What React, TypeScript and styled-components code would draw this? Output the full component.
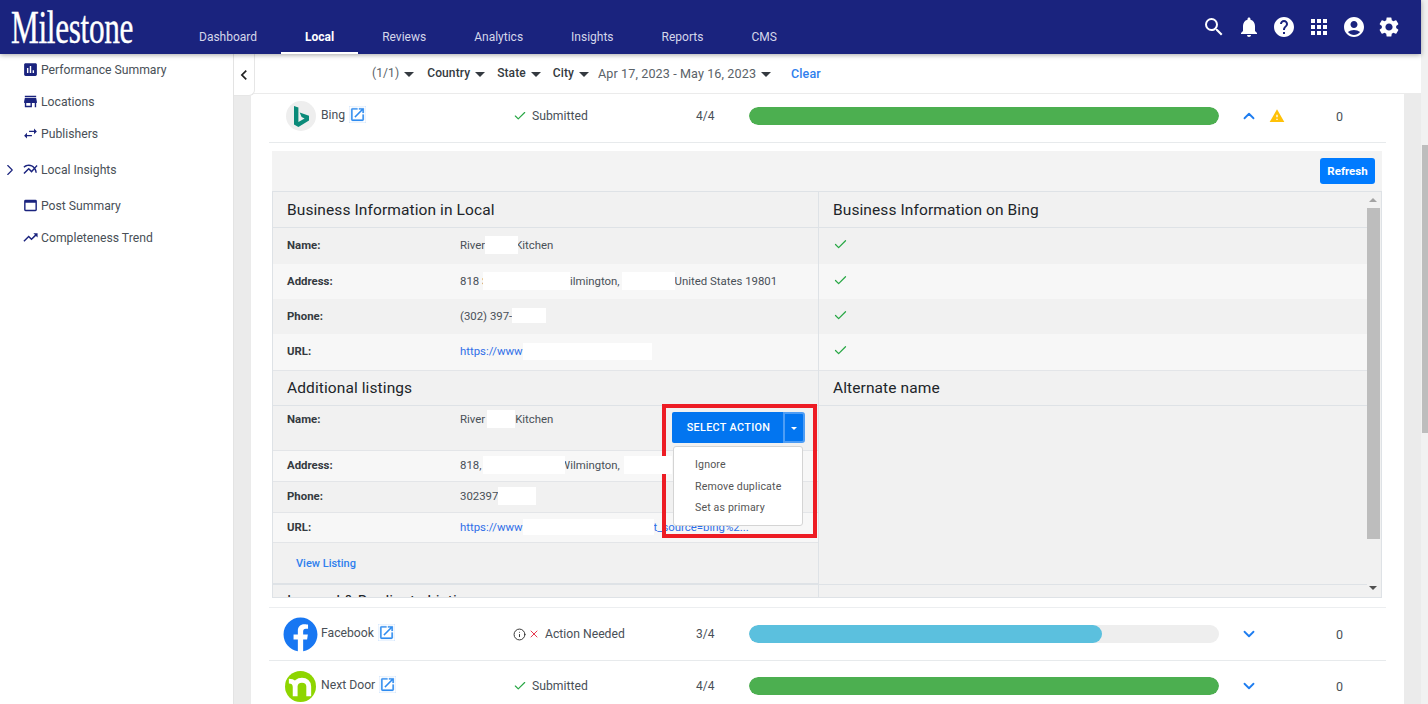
import styled, { createGlobalStyle } from "styled-components";
import {
  MdSearch,
  MdNotifications,
  MdHelp,
  MdApps,
  MdAccountCircle,
  MdSettings,
  MdAssessment,
  MdStore,
  MdSwapHoriz,
  MdMultilineChart,
  MdWebAsset,
  MdTrendingUp,
  MdChevronLeft,
  MdOpenInNew,
  MdWarning,
} from "react-icons/md";
import { FaFacebook } from "react-icons/fa";
import { Check, ChevronDown, ChevronRight, ChevronUp, Info, X } from "lucide-react";

const GlobalStyle = createGlobalStyle`
  html, body {
    margin: 0;
    padding: 0;
    height: 100%;
    overflow: hidden;
    background: #fff;
  }
  body {
    font-family: Roboto, "Liberation Sans", sans-serif;
    color: #495057;
  }
  * {
    box-sizing: border-box;
  }
`;

const Page = styled.div`
  display: flex;
  width: 1428px;
  height: 704px;
  overflow: hidden;
`;

const PageBody = styled.div`
  display: flex;
  flex-direction: column;
  width: 1421px;
  height: 704px;
`;

const PageScrollbar = styled.div`
  width: 7px;
  height: 704px;
  padding-top: 145px;
  padding-left: 1px;
  background: #f1f1f1;
`;

const PageThumb = styled.div`
  height: 288px;
  background: #bdbdbd;
`;

/* header */
const Header = styled.header`
  position: relative;
  z-index: 3;
  display: flex;
  align-items: stretch;
  flex: 0 0 54px;
  background: #1a237e;
  box-shadow: 0 1px 5px rgba(0, 0, 0, 0.35);
`;

const LogoSlot = styled.div`
  width: 175px;
  padding-left: 11px;
  overflow: hidden;
`;

const Logo = styled.div`
  font-family: "Liberation Serif", serif;
  font-size: 47px;
  line-height: 54px;
  color: #fff;
  letter-spacing: -0.5px;
  -webkit-text-stroke: 0.4px #fff;
  transform: scaleX(0.665);
  transform-origin: left center;
  white-space: nowrap;
`;

const Nav = styled.nav`
  display: flex;
  flex: 1;
`;

const NavTab = styled.a<{ $active?: boolean }>`
  display: flex;
  align-items: center;
  padding: 21px 24px 0;
  font-size: 12px;
  font-weight: ${({ $active }) => ($active ? 700 : 400)};
  color: ${({ $active }) => ($active ? "#fff" : "#d5d7ea")};
  border-bottom: 2px solid ${({ $active }) => ($active ? "#fff" : "transparent")};
`;

const HeaderIcons = styled.div`
  display: flex;
  align-items: center;
  gap: 11px;
  padding: 0 20px 0 0;
  color: #fff;
  font-size: 24px;

  svg {
    display: block;
  }
`;

/* layout under the header */
const Body = styled.div`
  display: flex;
  flex: 1;
  min-height: 0;
`;

const Sidebar = styled.aside`
  flex: 0 0 234px;
  background: #fff;
  border-right: 1px solid #e3e3e3;
`;

const SideItem = styled.div<{ $height?: number }>`
  position: relative;
  display: flex;
  align-items: center;
  gap: 2px;
  height: ${({ $height }) => $height || 32}px;
  padding-left: 22px;
  padding-bottom: 1px;
  font-size: 12.2px;
  color: #495057;

  > svg {
    flex: none;
    color: #1a237e;
    font-size: 17px;
  }
`;

const SideArrow = styled.span`
  position: absolute;
  left: 1px;
  top: 50%;
  margin-top: -9px;
  line-height: 0;
  color: #1a237e;
`;

const Main = styled.main`
  position: relative;
  display: flex;
  flex-direction: column;
  flex: 1;
  min-width: 0;
  background: #ebebeb;
`;

const CollapseTab = styled.button`
  position: absolute;
  z-index: 2;
  left: 0;
  top: 0;
  display: flex;
  align-items: center;
  justify-content: center;
  width: 21px;
  height: 42px;
  padding: 0;
  background: #fff;
  border: 0;
  border-right: 1px solid #e6e6e6;
  border-bottom: 1px solid #e6e6e6;
  border-radius: 0 0 6px 0;
  color: #222;
  font-size: 28px;
`;

const FilterBar = styled.div`
  display: flex;
  align-items: center;
  flex: 0 0 39px;
  padding: 0 0 1px 138px;
  background: #fff;
  font-size: 12px;
  letter-spacing: 0.1px;
`;

const FilterItem = styled.span<{ $bold?: boolean; $gap?: number; $size?: number }>`
  display: flex;
  align-items: center;
  gap: 5px;
  margin-right: ${({ $gap }) => $gap ?? 13}px;
  font-size: ${({ $size }) => $size || 12}px;
  font-weight: ${({ $bold }) => ($bold ? 500 : 400)};
  color: ${({ $bold }) => ($bold ? "#343a40" : "#5a6268")};
  white-space: nowrap;
`;

const Caret = styled.i`
  display: inline-block;
  width: 0;
  height: 0;
  margin-top: 2px;
  border-left: 5px solid transparent;
  border-right: 5px solid transparent;
  border-top: 5px solid #343a40;
`;

const ClearLink = styled.a`
  font-size: 12.5px;
  font-weight: 500;
  color: #2f80ed;
`;

const Gutter = styled.div`
  flex: 1;
  min-height: 0;
  padding: 1px 17px 0;
`;

const Card = styled.section`
  height: 100%;
  padding: 0 18px;
  background: #fff;
  overflow: hidden;
`;

/* publisher rows */
const PublisherRow = styled.div<{ $height: number; $line?: boolean; $topLine?: boolean; $lift?: number }>`
  display: grid;
  grid-template-columns: 244px 183px 53px 470px 1fr;
  align-items: center;
  height: ${({ $height }) => $height}px;
  padding-bottom: ${({ $lift }) => $lift || 0}px;
  border-top: ${({ $topLine }) => ($topLine ? "1px solid #eceef0" : "none")};
  border-bottom: ${({ $line }) => ($line ? "1px solid #e7eaec" : "none")};
  font-size: 12px;
`;

const PublisherName = styled.div`
  display: flex;
  align-items: center;
  padding-left: 14px;
  font-size: 12.2px;
  color: #495057;

  span {
    margin: 0 4px 3px 3px;
  }
`;

const LogoBox = styled.div`
  display: flex;
  align-items: center;
  justify-content: center;
  flex: 0 0 35px;
  height: 35px;
`;

const BingBadge = styled.div`
  display: flex;
  align-items: center;
  justify-content: center;
  width: 30px;
  height: 30px;
  border-radius: 50%;
  background: #eeeeee;
`;

const ExternalIcon = styled(MdOpenInNew)`
  flex: none;
  margin-bottom: 3px;
  color: #2f8cf0;
  font-size: 17px;
  stroke: currentColor;
  stroke-width: 0.3;
`;

const Status = styled.div`
  display: flex;
  align-items: center;
  gap: 5px;
  font-size: 12.2px;
  color: #495057;
`;

const StatusIcons = styled.span`
  display: flex;
  align-items: center;
  gap: 2px;
`;

const Track = styled.div`
  height: 18px;
  border-radius: 9px;
  background: #eeeeee;
  overflow: hidden;
`;

const Fill = styled.div<{ $color: string }>`
  height: 100%;
  border-radius: 9px;
  background: ${({ $color }) => $color};
`;

const Trailing = styled.div`
  display: grid;
  grid-template-columns: 18px 16px 8px;
  column-gap: 11px;
  align-items: center;
  padding-left: 21px;
  font-size: 12.5px;

  b {
    margin-left: 40px;
    font-weight: 400;
  }
`;

const ChevronIcon = styled.span`
  display: flex;
  justify-content: center;
  color: #1e7df0;
`;

/* bing detail panel */
const Panel = styled.div`
  width: 1110px;
  height: 447px;
  margin: 8px 0 9px 3px;
  background: #f3f3f3;
`;

const PanelTop = styled.div`
  display: flex;
  justify-content: flex-end;
  align-items: center;
  height: 40px;
  padding-right: 7px;
`;

const RefreshButton = styled.button`
  width: 55px;
  height: 26px;
  padding: 0;
  border: 0;
  border-radius: 3px;
  background: #007bff;
  color: #fff;
  font-family: inherit;
  font-size: 11.5px;
  font-weight: 700;
`;

const TableFrame = styled.div`
  display: flex;
  height: 407px;
  background: #f1f1f1;
  border: 1px solid #dee2e6;
  overflow: hidden;
`;

const Left = styled.div`
  position: relative;
  z-index: 1;
  flex: 0 0 545px;
`;

const Right = styled.div`
  flex: 0 0 549px;
  border-left: 1px solid #dee2e6;
`;

const TitleRow = styled.div<{ $height?: number }>`
  display: flex;
  align-items: center;
  flex: none;
  height: ${({ $height }) => $height || 36}px;
  padding-left: 14px;
  font-size: 15.5px;
  color: #212529;
  letter-spacing: 0.1px;
  border-bottom: 1px solid #dee2e6;
  white-space: nowrap;
`;

const InfoRow = styled.div<{ $height: number; $alt?: boolean; $line?: boolean; $top?: boolean }>`
  display: flex;
  align-items: ${({ $top }) => ($top ? "flex-start" : "center")};
  height: ${({ $height }) => $height}px;
  padding: ${({ $top }) => ($top ? "4px 0 0 14px" : "0 0 2px 14px")};
  background: ${({ $alt }) => ($alt ? "#f7f7f7" : "#f1f1f1")};
  border-bottom: ${({ $line }) => ($line ? "1px solid #e3e5e8" : "none")};
  font-size: 11.4px;
  line-height: 18px;
  color: #495057;
  white-space: nowrap;
`;

const Label = styled.span`
  flex: 0 0 173px;
  font-weight: 700;
  color: #343a40;
`;

const Value = styled.span<{ $link?: boolean }>`
  display: flex;
  align-items: center;
  color: ${({ $link }) => ($link ? "#2f6fe8" : "#495057")};
`;

const Mask = styled.i<{ $w: number; $h?: number; $overlap?: number; $push?: number }>`
  position: relative;
  z-index: 1;
  flex: none;
  display: block;
  width: ${({ $w }) => $w}px;
  height: ${({ $h }) => $h || 18}px;
  margin-left: ${({ $push }) => $push || 0}px;
  margin-right: ${({ $overlap }) => ($overlap ? -$overlap : 0)}px;
  background: #fff;
`;

const CheckRow = styled(InfoRow)`
  padding-bottom: 3px;
  color: #28a745;
`;

const ViewListingRow = styled.div`
  display: flex;
  align-items: center;
  height: 42px;
  padding-left: 23px;
  border-bottom: 2px solid #dee2e6;
  font-size: 11px;
  font-weight: 500;
  color: #2f7fed;
`;

const BlankArea = styled.div`
  height: 179px;
  border-bottom: 1px solid #dee2e6;
`;

const TableScrollbar = styled.div`
  position: relative;
  flex: 0 0 14px;
  padding-top: 16px;
  background: #f1f1f1;
`;

const ScrollThumb = styled.div`
  width: 13px;
  height: 331px;
  background: #bdbdbd;
`;

const ScrollArrow = styled.i<{ $down?: boolean }>`
  position: absolute;
  left: 2px;
  ${({ $down }) => ($down ? "bottom: 7px;" : "top: 6px;")}
  width: 0;
  height: 0;
  border-left: 4px solid transparent;
  border-right: 4px solid transparent;
  ${({ $down }) => ($down ? "border-top: 4px solid #505050;" : "border-bottom: 4px solid #a3a3a3;")}
`;

/* highlighted action menu */
const Highlight = styled.div`
  position: absolute;
  left: 389px;
  top: 212px;
  width: 155px;
  height: 134px;
  padding: 4px 0 0 6px;
  border: 4px solid #ed1c24;
`;

const ActionGroup = styled.div`
  display: flex;
  width: 133px;
  height: 31px;
`;

const ActionMain = styled.button`
  flex: 0 0 111px;
  padding: 0 0 0 2px;
  border: 0;
  border-radius: 2px 0 0 2px;
  background: #0275f0;
  color: #fff;
  font-family: inherit;
  font-size: 10.8px;
  font-weight: 500;
  letter-spacing: 0.35px;
`;

const ActionCaret = styled.button`
  display: flex;
  align-items: center;
  justify-content: center;
  flex: 1;
  padding: 0;
  border: 2px solid #4d9df5;
  border-radius: 0 3px 3px 0;
  background: #0275f0;

  i {
    border-left: 3px solid transparent;
    border-right: 3px solid transparent;
    border-top: 3px solid #fff;
  }
`;

const Menu = styled.div`
  width: 130px;
  height: 80px;
  margin: 3px 0 0 1px;
  padding: 9px 0 0 21px;
  background: #fff;
  border: 1px solid #d4d4d4;
  border-radius: 3px;
`;

const MenuItem = styled.div`
  height: 21.5px;
  font-size: 10.6px;
  line-height: 18px;
  letter-spacing: 0.15px;
  color: #555;
  white-space: nowrap;
`;

const BingLogo = () => (
  <svg width="24" height="24" viewBox="0 0 24 24">
    <path fill="#0a8a79" d="M5 2l4.4 1.5v14.6l6.2-3.6-3-1.4-1.9-4.7 9.3 3.3v4.7L9.4 23 5 20.6z" />
  </svg>
);

const NextDoorLogo = () => (
  <svg width="31" height="31" viewBox="0 0 32 32">
    <circle cx="16" cy="16" r="16" fill="#8ed500" />
    <path
      fill="none"
      stroke="#fff"
      strokeWidth="5"
      d="M4 10.5c4 0 6.5 1.5 6.5 6V26M10.5 16c0-4 3-6.5 7-6.5s7 2.5 7 6.5v10"
    />
  </svg>
);

const Submitted = () => (
  <Status>
    <Check size={14} color="#28a745" strokeWidth={2} />
    Submitted
  </Status>
);

const TableCheck = () => <Check size={15} strokeWidth={2} />;

function App() {
  return (
    <>
      <GlobalStyle />
      <Page>
        <PageBody>
          <Header>
            <LogoSlot>
              <Logo>Milestone</Logo>
            </LogoSlot>
            <Nav>
              <NavTab>Dashboard</NavTab>
              <NavTab $active>Local</NavTab>
              <NavTab>Reviews</NavTab>
              <NavTab>Analytics</NavTab>
              <NavTab>Insights</NavTab>
              <NavTab>Reports</NavTab>
              <NavTab>CMS</NavTab>
            </Nav>
            <HeaderIcons>
              <MdSearch />
              <MdNotifications />
              <MdHelp />
              <MdApps />
              <MdAccountCircle />
              <MdSettings />
            </HeaderIcons>
          </Header>
          <Body>
            <Sidebar>
              <SideItem><MdAssessment />Performance Summary</SideItem>
              <SideItem><MdStore />Locations</SideItem>
              <SideItem><MdSwapHoriz />Publishers</SideItem>
              <SideItem $height={40}>
                <SideArrow><ChevronRight size={18} strokeWidth={1.5} /></SideArrow>
                <MdMultilineChart />Local Insights
              </SideItem>
              <SideItem><MdWebAsset />Post Summary</SideItem>
              <SideItem><MdTrendingUp />Completeness Trend</SideItem>
            </Sidebar>
            <Main>
              <CollapseTab><MdChevronLeft /></CollapseTab>
              <FilterBar>
                <FilterItem>(1/1) <Caret /></FilterItem>
                <FilterItem $bold $gap={12}>Country <Caret /></FilterItem>
                <FilterItem $bold $gap={12}>State <Caret /></FilterItem>
                <FilterItem $bold $gap={9}>City <Caret /></FilterItem>
                <FilterItem $gap={20} $size={12.6}>Apr 17, 2023 - May 16, 2023 <Caret /></FilterItem>
                <ClearLink>Clear</ClearLink>
              </FilterBar>
              <Gutter>
                <Card>
                  <PublisherRow $height={49} $line $lift={4}>
                    <PublisherName>
                      <LogoBox><BingBadge><BingLogo /></BingBadge></LogoBox>
                      <span>Bing</span>
                      <ExternalIcon />
                    </PublisherName>
                    <Submitted />
                    <div>4/4</div>
                    <Track><Fill $color="#4caf50" style={{ width: "100%" }} /></Track>
                    <Trailing>
                      <ChevronIcon><ChevronUp size={30} strokeWidth={2.4} /></ChevronIcon>
                      <MdWarning color="#ffc107" size={16} />
                      <b>0</b>
                    </Trailing>
                  </PublisherRow>
                  <Panel>
                    <PanelTop><RefreshButton>Refresh</RefreshButton></PanelTop>
                    <TableFrame>
                      <Left>
                        <TitleRow>Business Information in Local</TitleRow>
                        <InfoRow $height={36}>
                          <Label>Name:</Label>
                          <Value>River<Mask $w={33} $overlap={3} />Kitchen</Value>
                        </InfoRow>
                        <InfoRow $height={35} $alt>
                          <Label>Address:</Label>
                          <Value>
                            818 S<Mask $w={87} $push={-6} $overlap={10} />Wilmington,
                            <Mask $w={53} $push={2} />United States 19801
                          </Value>
                        </InfoRow>
                        <InfoRow $height={35}>
                          <Label>Phone:</Label>
                          <Value>(302) 397-<Mask $w={34} $h={15} /></Value>
                        </InfoRow>
                        <InfoRow $height={37} $alt $line>
                          <Label>URL:</Label>
                          <Value $link>https://www<Mask $w={129} $h={17} /></Value>
                        </InfoRow>
                        <TitleRow $height={35}>Additional listings</TitleRow>
                        <InfoRow $height={45} $line $top>
                          <Label>Name:</Label>
                          <Value>River<Mask $w={28} $push={2} />Kitchen</Value>
                        </InfoRow>
                        <InfoRow $height={31} $alt $line>
                          <Label>Address:</Label>
                          <Value>
                            818, S<Mask $w={82} $push={-8} $overlap={5} />Wilmington,
                            <Mask $w={48} $push={4} />
                          </Value>
                        </InfoRow>
                        <InfoRow $height={31} $line>
                          <Label>Phone:</Label>
                          <Value>302397<Mask $w={38} /></Value>
                        </InfoRow>
                        <InfoRow $height={30} $alt $line>
                          <Label>URL:</Label>
                          <Value $link>https://www<Mask $w={131} $h={16} />t_source=bing%2...</Value>
                        </InfoRow>
                        <ViewListingRow>View Listing</ViewListingRow>
                        <TitleRow $height={32}>Ignored &amp; Duplicate Listings</TitleRow>
                        <Highlight>
                          <ActionGroup>
                            <ActionMain>SELECT ACTION</ActionMain>
                            <ActionCaret><Caret /></ActionCaret>
                          </ActionGroup>
                          <Menu>
                            <MenuItem>Ignore</MenuItem>
                            <MenuItem>Remove duplicate</MenuItem>
                            <MenuItem>Set as primary</MenuItem>
                          </Menu>
                        </Highlight>
                      </Left>
                      <Right>
                        <TitleRow>Business Information on Bing</TitleRow>
                        <CheckRow $height={36}><TableCheck /></CheckRow>
                        <CheckRow $height={35} $alt><TableCheck /></CheckRow>
                        <CheckRow $height={35}><TableCheck /></CheckRow>
                        <CheckRow $height={37} $alt $line><TableCheck /></CheckRow>
                        <TitleRow $height={35}>Alternate name</TitleRow>
                        <BlankArea />
                      </Right>
                      <TableScrollbar>
                        <ScrollArrow />
                        <ScrollThumb />
                        <ScrollArrow $down />
                      </TableScrollbar>
                    </TableFrame>
                  </Panel>
                  <PublisherRow $height={54} $line $topLine>
                    <PublisherName>
                      <LogoBox><FaFacebook color="#1877f2" size={35} /></LogoBox>
                      <span>Facebook</span>
                      <ExternalIcon />
                    </PublisherName>
                    <Status>
                      <StatusIcons>
                        <Info size={13} color="#333" strokeWidth={1.8} />
                        <X size={12} color="#e8384f" strokeWidth={2} />
                      </StatusIcons>
                      Action Needed
                    </Status>
                    <div>3/4</div>
                    <Track><Fill $color="#5bc0de" style={{ width: "75%" }} /></Track>
                    <Trailing>
                      <ChevronIcon><ChevronDown size={30} strokeWidth={2.4} /></ChevronIcon>
                      <span />
                      <b>0</b>
                    </Trailing>
                  </PublisherRow>
                  <PublisherRow $height={50}>
                    <PublisherName>
                      <LogoBox><NextDoorLogo /></LogoBox>
                      <span>Next Door</span>
                      <ExternalIcon />
                    </PublisherName>
                    <Submitted />
                    <div>4/4</div>
                    <Track><Fill $color="#4caf50" style={{ width: "100%" }} /></Track>
                    <Trailing>
                      <ChevronIcon><ChevronDown size={30} strokeWidth={2.4} /></ChevronIcon>
                      <span />
                      <b>0</b>
                    </Trailing>
                  </PublisherRow>
                </Card>
              </Gutter>
            </Main>
          </Body>
        </PageBody>
        <PageScrollbar><PageThumb /></PageScrollbar>
      </Page>
    </>
  );
}

export default App;
